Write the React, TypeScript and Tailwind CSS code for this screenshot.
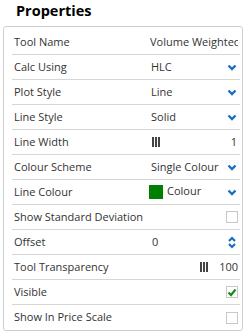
import React from "react";

const Chevron = () => (
  <svg width="10" height="7" viewBox="0 0 10 7" className="text-[#1b6ec2]">
    <polyline points="1.5 1.5 5 5 8.5 1.5" fill="none" stroke="currentColor" strokeWidth="2.4" />
  </svg>
);

const Spinner = () => (
  <svg width="8" height="13" viewBox="0 0 8 13" className="text-[#1b6ec2]">
    <polyline points="1 5 4 2 7 5" fill="none" stroke="currentColor" strokeWidth="2.2" />
    <polyline points="1 8 4 11 7 8" fill="none" stroke="currentColor" strokeWidth="2.2" />
  </svg>
);

const Bars = () => (
  <span className="flex gap-[1px] h-[10px]">
    <span className="w-[2px] bg-[#444]" />
    <span className="w-[2px] bg-[#444]" />
    <span className="w-[2px] bg-[#444]" />
  </span>
);

const Box = ({ checked }: { checked?: boolean }) => (
  <span className="w-[12px] h-[12px] border border-[#c8c8c8] bg-white flex items-center justify-center">
    {checked && (
      <svg width="10" height="9" viewBox="0 0 10 9">
        <polyline points="1.5 4.5 4 7 8.5 1.5" fill="none" stroke="#1c8c1c" strokeWidth="2.2" />
      </svg>
    )}
  </span>
);

type Row = { label: string; value?: React.ReactNode };

export default function App() {
  const rows: Row[] = [
    { label: "Tool Name", value: <span className="whitespace-nowrap overflow-hidden w-[88px]">Volume Weighted Average Price</span> },
    { label: "Calc Using", value: <Select text="HLC" /> },
    { label: "Plot Style", value: <Select text="Line" /> },
    { label: "Line Style", value: <Select text="Solid" /> },
    {
      label: "Line Width",
      value: (
        <div className="flex-1 flex items-center justify-between pl-[2px] pr-[3px]">
          <Bars />
          <span>1</span>
        </div>
      ),
    },
    { label: "Colour Scheme", value: <Select text="Single Colour" /> },
    {
      label: "Line Colour",
      value: (
        <div className="flex-1 flex items-center justify-between pr-[3px]">
          <span className="flex items-center gap-[4px] -ml-[1px]">
            <span className="w-[14px] h-[14px] bg-[#008000]" />
            <span className="-mt-[2px]">Colour</span>
          </span>
          <Chevron />
        </div>
      ),
    },
    { label: "Show Standard Deviation", value: <Check /> },
    {
      label: "Offset",
      value: (
        <div className="flex-1 flex items-center justify-between pl-[2px] pr-[4px]">
          <span>0</span>
          <Spinner />
        </div>
      ),
    },
    {
      label: "Tool Transparency",
      value: (
        <div className="flex-1 flex items-center justify-end gap-[11px] pr-[2px]">
          <Bars />
          <span>100</span>
        </div>
      ),
    },
    { label: "Visible", value: <Check checked /> },
    { label: "Show In Price Scale", value: <Check /> },
  ];

  return (
    <div className="w-[249px] h-[333px] bg-white font-['Open_Sans',sans-serif] text-[#333] overflow-hidden">
      <h1 className="pl-[16px] pt-[1px] h-[26px] text-[14.5px] font-bold text-black leading-[20px]">
        Properties
      </h1>
      <div className="ml-[3px] w-[240px] h-[305px] border border-[#cfcfcf] rounded-[3px] pt-[3px] pl-[8px] pr-[2px]">
        {rows.map((r, i) => (
          <div
            key={r.label}
            className={`h-[25px] flex items-center text-[11px] ${i < rows.length - 1 ? "border-b border-[#d6d6d6]" : ""}`}
          >
            <span className="w-[138px] pl-[2px] whitespace-nowrap">{r.label}</span>
            {r.value}
          </div>
        ))}
      </div>
    </div>
  );
}

function Select({ text }: { text: string }) {
  return (
    <div className="flex-1 flex items-center justify-between pl-[1px] pr-[3px]">
      <span className="whitespace-nowrap">{text}</span>
      <Chevron />
    </div>
  );
}

function Check({ checked }: { checked?: boolean }) {
  return (
    <div className="flex-1 flex items-center justify-end pr-[2px]">
      <Box checked={checked} />
    </div>
  );
}
